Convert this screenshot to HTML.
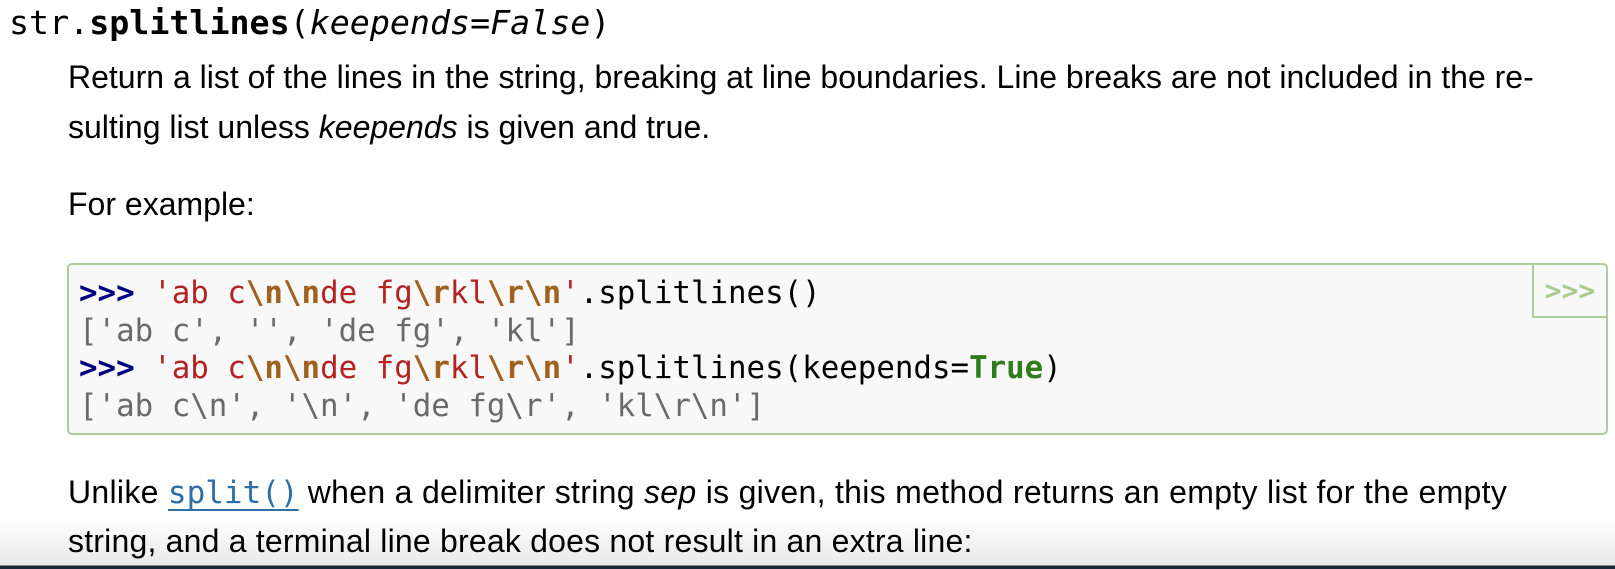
<!DOCTYPE html>
<html><head><meta charset="utf-8"><style>
html,body{margin:0;padding:0;}
body{width:1615px;height:569px;position:relative;overflow:hidden;background:#fff;
background:linear-gradient(to bottom,#fff 0,#fff 517px,#e9e9e9 565px,#1c2838 566px,#1c2838 569px);}
.l{position:absolute;white-space:nowrap;font-family:"Liberation Sans",Arial,sans-serif;font-size:32px;line-height:50px;color:#000;left:68px;}
.m{font-family:"DejaVu Sans Mono","Liberation Mono",monospace;}
.h{position:absolute;left:9px;top:3px;font-size:33.3px;line-height:40px;white-space:nowrap;color:#000;}
.box{position:absolute;left:67px;top:263px;width:1537px;height:168px;border:2px solid #b0cc98;border-radius:5px;background:#f8f8f8;box-sizing:content-box;}
.cp{position:absolute;right:0;top:0;width:72px;height:51px;border-left:2px solid #b0cc98;border-bottom:2px solid #b0cc98;color:#aacb90;font-size:28px;line-height:51px;text-align:center;font-weight:bold;}
.c{position:absolute;left:10px;font-size:30.8px;line-height:37.5px;white-space:pre;color:#000;}
.p{color:#000080;font-weight:bold}
.s{color:#b42222}
.e{color:#a1611f;font-weight:bold}
.o{color:#6a6a6a}
.k{color:#2f7d1a;font-weight:bold}
a{color:#2b6ea8;text-decoration:underline;text-underline-offset:6px;text-decoration-thickness:2px;font-size:31px;letter-spacing:0}
.w{letter-spacing:0.3px}
</style></head><body>
<div class="h m">str.<b>splitlines</b>(<i>keepends=False</i>)</div>
<div class="l" style="top:52px">Return a list of the lines in the string, breaking at line boundaries. Line breaks are not included in the re-</div>
<div class="l" style="top:102px">sulting list unless <i>keepends</i> is given and true.</div>
<div class="l" style="top:179px">For example:</div>
<div class="box">
<div class="cp m">&gt;&gt;&gt;</div>
<div class="c m" style="top:10px"><span class="p">&gt;&gt;&gt;</span> <span class="s">'ab c</span><span class="e">\n\n</span><span class="s">de fg</span><span class="e">\r</span><span class="s">kl</span><span class="e">\r\n</span><span class="s">'</span>.splitlines()</div>
<div class="c m o" style="top:47.5px">['ab c', '', 'de fg', 'kl']</div>
<div class="c m" style="top:85px"><span class="p">&gt;&gt;&gt;</span> <span class="s">'ab c</span><span class="e">\n\n</span><span class="s">de fg</span><span class="e">\r</span><span class="s">kl</span><span class="e">\r\n</span><span class="s">'</span>.splitlines(keepends=<span class="k">True</span>)</div>
<div class="c m o" style="top:122.5px">['ab c\n', '\n', 'de fg\r', 'kl\r\n']</div>
</div>
<div class="l w" style="top:467px">Unlike <a class="m">split()</a> when a delimiter string <i>sep</i> is given, this method returns an empty list for the empty</div>
<div class="l" style="top:516px;letter-spacing:0.2px">string, and a terminal line break does not result in an extra line:</div>
</body></html>
